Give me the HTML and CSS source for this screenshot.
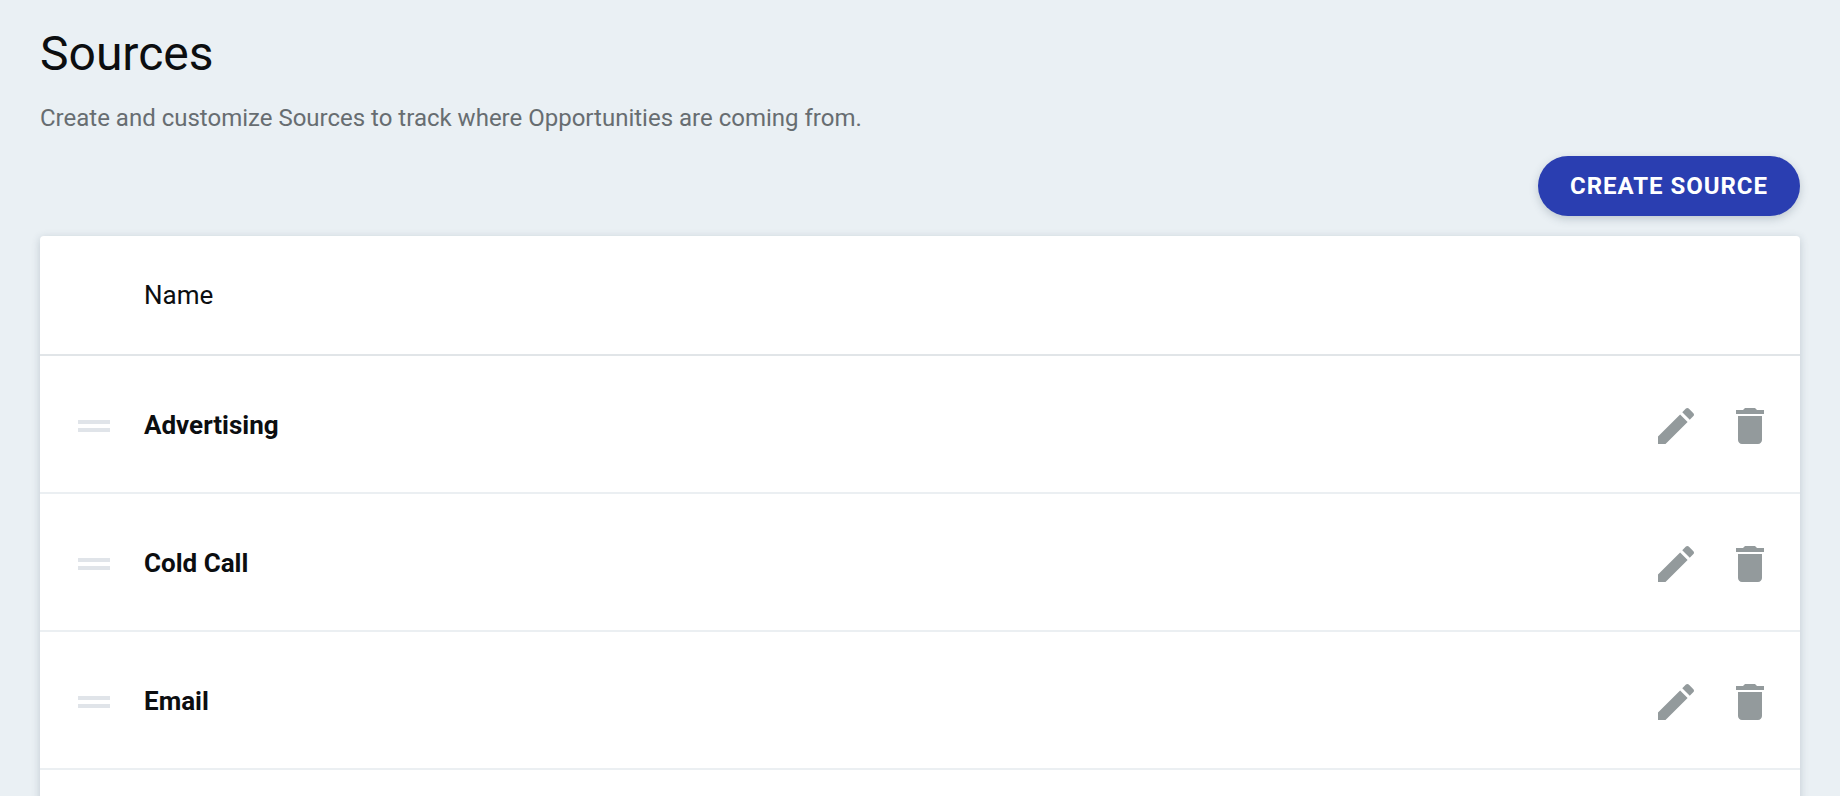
FILE: index.html
```html
<!DOCTYPE html>
<html lang="en">
<head>
<meta charset="utf-8">
<title>Sources</title>
<link rel="stylesheet" href="styles.css">
</head>
<body>
<main class="page">
  <h1 class="title">Sources</h1>
  <p class="subtitle">Create and customize Sources to track where Opportunities are coming from.</p>
  <div class="toolbar"><button class="btn">CREATE SOURCE</button></div>
  <section class="card">
    <div class="head"><span class="head-name">Name</span></div>
    <div class="row">
      <span class="handle"><i></i><i></i></span>
      <span class="name">Advertising</span>
      <span class="actions">
        <svg class="icon" viewBox="0 0 24 24"><path d="M3 17.25V21h3.75L17.81 9.94l-3.75-3.75L3 17.25zM20.71 7.04c.39-.39.39-1.02 0-1.41l-2.34-2.34c-.39-.39-1.02-.39-1.41 0l-1.83 1.83 3.75 3.75 1.83-1.83z"/></svg>
        <svg class="icon" viewBox="0 0 24 24"><path d="M6 19c0 1.1.9 2 2 2h8c1.1 0 2-.9 2-2V7H6v12zM19 4h-3.5l-1-1h-5l-1 1H5v2h14V4z"/></svg>
      </span>
    </div>
    <div class="row">
      <span class="handle"><i></i><i></i></span>
      <span class="name">Cold Call</span>
      <span class="actions">
        <svg class="icon" viewBox="0 0 24 24"><path d="M3 17.25V21h3.75L17.81 9.94l-3.75-3.75L3 17.25zM20.71 7.04c.39-.39.39-1.02 0-1.41l-2.34-2.34c-.39-.39-1.02-.39-1.41 0l-1.83 1.83 3.75 3.75 1.83-1.83z"/></svg>
        <svg class="icon" viewBox="0 0 24 24"><path d="M6 19c0 1.1.9 2 2 2h8c1.1 0 2-.9 2-2V7H6v12zM19 4h-3.5l-1-1h-5l-1 1H5v2h14V4z"/></svg>
      </span>
    </div>
    <div class="row">
      <span class="handle"><i></i><i></i></span>
      <span class="name">Email</span>
      <span class="actions">
        <svg class="icon" viewBox="0 0 24 24"><path d="M3 17.25V21h3.75L17.81 9.94l-3.75-3.75L3 17.25zM20.71 7.04c.39-.39.39-1.02 0-1.41l-2.34-2.34c-.39-.39-1.02-.39-1.41 0l-1.83 1.83 3.75 3.75 1.83-1.83z"/></svg>
        <svg class="icon" viewBox="0 0 24 24"><path d="M6 19c0 1.1.9 2 2 2h8c1.1 0 2-.9 2-2V7H6v12zM19 4h-3.5l-1-1h-5l-1 1H5v2h14V4z"/></svg>
      </span>
    </div>
    <div class="row"></div>
  </section>
</main>
</body>
</html>
```
FILE: styles.css
```css
* { box-sizing: border-box; }
html, body { margin: 0; height: 100%; overflow: hidden; }
body { background: #eaf0f4; font-family: Roboto, "Liberation Sans", sans-serif; color: #0c0e10; }
.page { padding: 25px 40px 0; }
.title { margin: 0; font-size: 48px; line-height: 58px; font-weight: 400; }
.subtitle { margin: 20px 0 0; font-size: 24px; line-height: 30px; color: #676d71; }
.toolbar { display: flex; justify-content: flex-end; margin-top: 23px; }
.btn { height: 60px; width: 262px; border: 0; border-radius: 30px; background: #2a3eb1; color: #fff; font: 700 24px/1 Roboto, sans-serif; letter-spacing: .96px; box-shadow: 0 3px 8px rgba(60, 80, 100, .25); padding: 0; }
.card { margin-top: 20px; background: #fff; border-radius: 4px; box-shadow: 0 2px 8px rgba(60, 80, 100, .24); }
.head { height: 120px; display: flex; align-items: center; padding: 0 0 1px 104px; border-bottom: 2px solid #e1e5e8; }
.head-name { font-size: 26px; }
.row { height: 138px; display: flex; align-items: center; border-bottom: 2px solid #ebeff2; padding: 4px 26px 0 38px; }
.handle { display: flex; flex-direction: column; gap: 4px; width: 32px; }
.handle i { display: block; height: 4px; background: #e0e4e9; }
.name { margin: 0 0 2px 34px; font-size: 26px; font-weight: 700; flex: 1; }
.actions { display: flex; gap: 26px; }
.icon { width: 48px; height: 48px; fill: #939a9c; display: block; }
```
